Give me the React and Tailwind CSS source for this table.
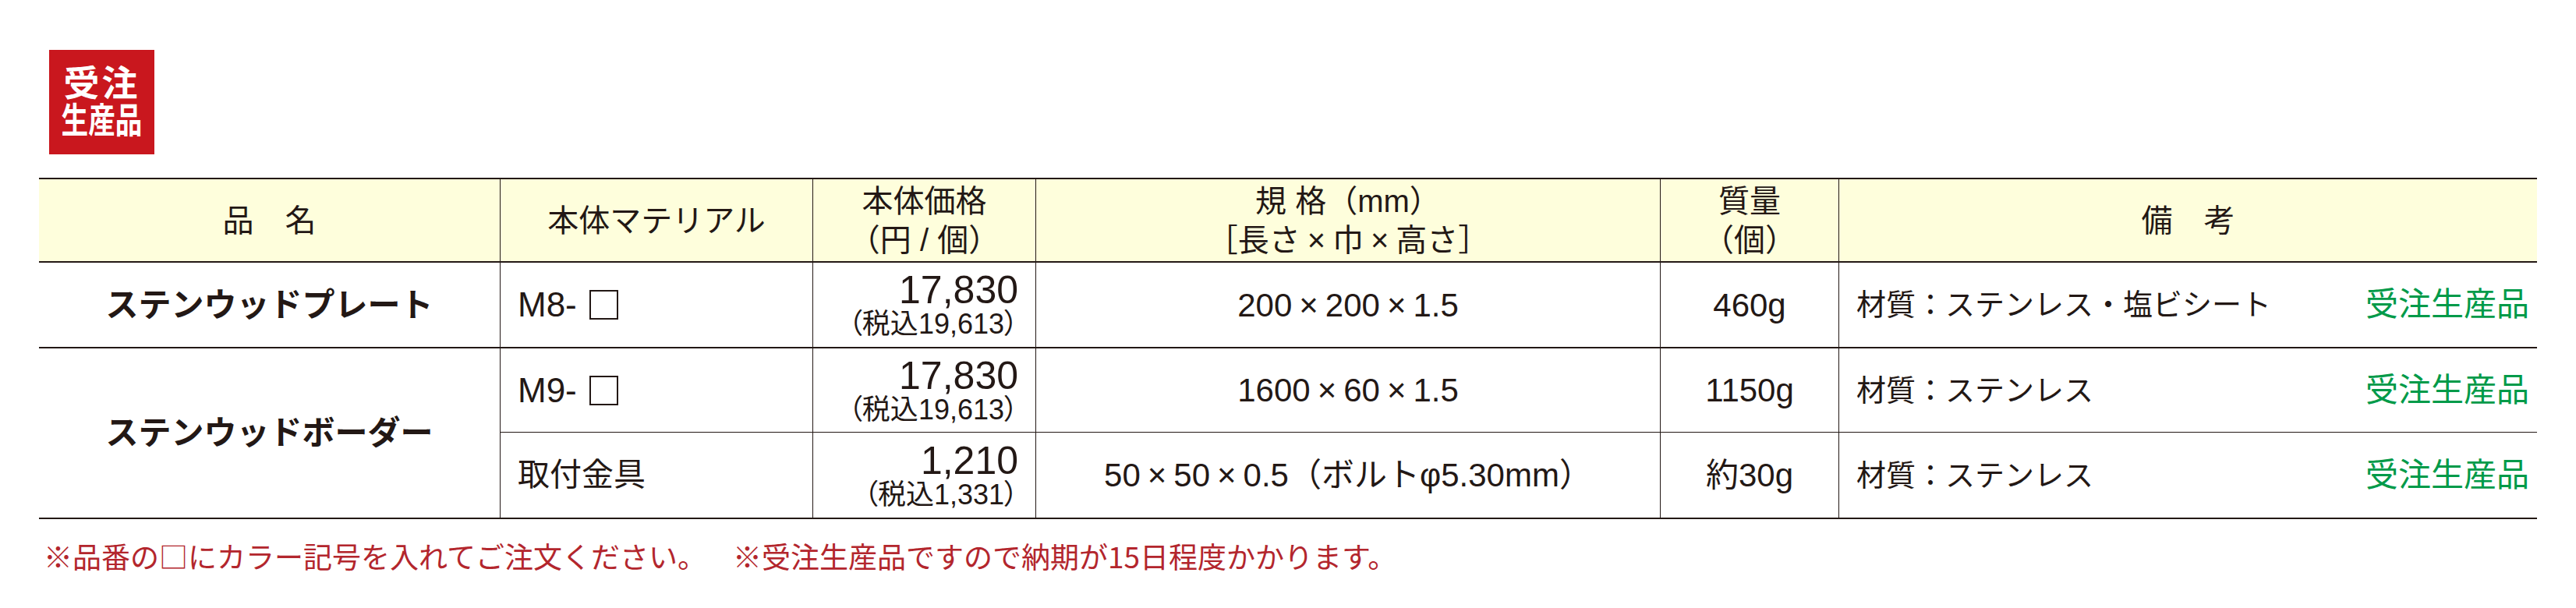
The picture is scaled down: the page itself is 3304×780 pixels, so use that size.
import React from 'react';

const font = { fontFamily: '"Liberation Sans", "Noto Sans CJK JP", sans-serif' };
const jpFont = { fontFamily: '"Noto Sans CJK JP", sans-serif' };

// 全角幅に見せる「×」
const X = () => <span className="mx-[9px]">×</span>;

const ColorBox = () => (
  <span className="inline-block w-[37px] h-[38px] border-2 border-[#231815] ml-[16px]"></span>
);

const Price = ({ main, tax }) => (
  <div className="flex flex-col items-end pr-[22px]">
    <div className="text-[50px] leading-[50px]">{main}</div>
    <div className="text-[36px] leading-[38px] [font-feature-settings:'palt']">（税込{tax}）</div>
  </div>
);

const Remark = ({ text }) => (
  <div className="flex items-center justify-between pl-[22px] pr-[10px]">
    <span className="text-[38px] leading-none">{text}</span>
    <span className="text-[42px] leading-none text-[#009a49]">受注生産品</span>
  </div>
);

export default function App() {
  const th = 'border-t-2 border-b-2 border-[#231815] bg-[#fefedc] font-normal text-[40px] leading-[50px] text-center align-middle p-0';
  const td = 'border-[#231815] align-middle p-0';

  return (
    <div className="w-[3304px] h-[780px] bg-white pt-[64px] pl-[50px] text-[#231815]" style={font}>
      {/* 受注生産品バッジ */}
      <div className="ml-[13px] w-[135px] h-[134px] bg-[#c9171e] text-white font-bold flex flex-col items-center justify-center">
        <div className="text-[46px] leading-[50px] tracking-[3px]">受注</div>
        <div className="text-[45px] leading-[48px] scale-x-[0.77] whitespace-nowrap">生産品</div>
      </div>

      <table className="mt-[30px] table-fixed w-[3204px] border-separate border-spacing-0">
        <colgroup>
          <col className="w-[591px]" />
          <col className="w-[401px]" />
          <col className="w-[286px]" />
          <col className="w-[801px]" />
          <col className="w-[229px]" />
          <col className="w-[896px]" />
        </colgroup>
        <thead>
          <tr className="h-[109px]">
            <th className={th}>品　名</th>
            <th className={`${th} border-l`}>本体マテリアル</th>
            <th className={`${th} border-l`}>
              <div>本体価格</div>
              <div>（円 / 個）</div>
            </th>
            <th className={`${th} border-l`}>
              <div>規 格（mm）</div>
              <div>［長さ<X />巾<X />高さ］</div>
            </th>
            <th className={`${th} border-l`}>
              <div>質量</div>
              <div>（個）</div>
            </th>
            <th className={`${th} border-l`}>備　考</th>
          </tr>
        </thead>
        <tbody>
          {/* ステンウッドプレート */}
          <tr className="h-[110px]">
            <td className={`${td} border-b-2 text-center text-[42px] font-bold`}>ステンウッドプレート</td>
            <td className={`${td} border-b-2 border-l`}>
              <div className="flex items-center pl-[22px] text-[44px] leading-none">M8-<ColorBox /></div>
            </td>
            <td className={`${td} border-b-2 border-l`}>
              <Price main="17,830" tax="19,613" />
            </td>
            <td className={`${td} border-b-2 border-l text-center text-[42px]`}>200<X />200<X />1.5</td>
            <td className={`${td} border-b-2 border-l text-center text-[42px]`}>460g</td>
            <td className={`${td} border-b-2 border-l`}>
              <Remark text="材質：ステンレス・塩ビシート" />
            </td>
          </tr>

          {/* ステンウッドボーダー */}
          <tr className="h-[108px]">
            <td rowSpan={2} className={`${td} border-b-2 text-center text-[42px] font-bold`}>ステンウッドボーダー</td>
            <td className={`${td} border-b border-l`}>
              <div className="flex items-center pl-[22px] text-[44px] leading-none">M9-<ColorBox /></div>
            </td>
            <td className={`${td} border-b border-l`}>
              <Price main="17,830" tax="19,613" />
            </td>
            <td className={`${td} border-b border-l text-center text-[42px]`}>1600<X />60<X />1.5</td>
            <td className={`${td} border-b border-l text-center text-[42px]`}>1150g</td>
            <td className={`${td} border-b border-l`}>
              <Remark text="材質：ステンレス" />
            </td>
          </tr>
          <tr className="h-[111px]">
            <td className={`${td} border-b-2 border-l pl-[22px] text-[41px]`}>取付金具</td>
            <td className={`${td} border-b-2 border-l`}>
              <Price main="1,210" tax="1,331" />
            </td>
            <td className={`${td} border-b-2 border-l text-center text-[42px]`}>50<X />50<X />0.5（ボルトφ5.30mm）</td>
            <td className={`${td} border-b-2 border-l text-center text-[42px]`}>約30g</td>
            <td className={`${td} border-b-2 border-l`}>
              <Remark text="材質：ステンレス" />
            </td>
          </tr>
        </tbody>
      </table>

      {/* 注記 */}
      <div className="mt-[29px] ml-[6px] flex text-[37px] leading-[37px] text-[#b3262d] whitespace-nowrap" style={jpFont}>
        <span>※品番の□にカラー記号を入れてご注文ください。</span>
        <span className="ml-[34px]">※受注生産品ですので納期が15日程度かかります。</span>
      </div>
    </div>
  );
}
